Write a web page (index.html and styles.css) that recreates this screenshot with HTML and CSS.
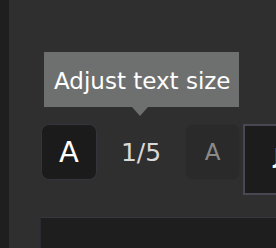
FILE: index.html
```html
<!DOCTYPE html>
<html>
<head>
<meta charset="utf-8">
<link rel="stylesheet" href="styles.css">
</head>
<body>
<div class="app">
  <aside class="rail"></aside>
  <main class="main">
    <div class="toolbar">
      <button class="size-btn active">A</button>
      <span class="count">1/5</span>
      <button class="size-btn muted">A</button>
      <div class="box"><span class="tick">J</span></div>
    </div>
    <div class="panel"><span class="panel-text">T</span></div>
  </main>
  <div class="tooltip">Adjust text size</div>
</div>
</body>
</html>
```
FILE: styles.css
```css
html, body {
  margin: 0;
  padding: 0;
  width: 276px;
  height: 248px;
  overflow: hidden;
  background: #2f2f2f;
  font-family: "DejaVu Sans", Verdana, sans-serif;
}
.app {
  position: relative;
  display: flex;
  width: 276px;
  height: 248px;
  overflow: hidden;
}
.rail {
  width: 9px;
  flex: none;
  background: #1f1f1f;
}
.main {
  flex: 1;
  display: flex;
  flex-direction: column;
  padding-top: 124px;
  min-width: 0;
}
.toolbar {
  display: flex;
  align-items: flex-start;
  margin-left: 32px;
  height: 71px;
  flex: none;
}
.toolbar > * {
  flex: none;
}
.size-btn {
  box-sizing: border-box;
  width: 56px;
  height: 56px;
  border-radius: 8px;
  font-family: "DejaVu Sans", Verdana, sans-serif;
  padding: 0;
  display: flex;
  align-items: center;
  justify-content: center;
}
.size-btn.active {
  background: #1b1b1b;
  border: 1px solid #34343a;
  color: #ffffff;
  font-size: 29px;
}
.size-btn.muted {
  width: 55px;
  background: #2a2a2a;
  border: 1px solid #2d2d2d;
  color: #8a8a8a;
  font-size: 23px;
}
.count {
  width: 88px;
  height: 56px;
  display: flex;
  align-items: center;
  justify-content: center;
  color: #d9d9d9;
  font-size: 25px;
}
.box {
  box-sizing: border-box;
  margin-left: 3px;
  width: 40px;
  height: 71px;
  background: #1c1c1c;
  border: 2px solid #484852;
  border-right: none;
  position: relative;
}
.tick {
  position: absolute;
  left: 29px;
  top: 18px;
  color: #ffffff;
  font-size: 22px;
  font-weight: bold;
}
.panel {
  margin-top: 22px;
  margin-left: 31px;
  flex: 1;
  background: #1e1e1e;
  border-top: 1px solid #36363e;
  border-left: 1px solid #2a2a30;
  position: relative;
}
.panel-text {
  position: absolute;
  left: 107px;
  top: 28px;
  color: #ffffff;
  font-size: 24px;
  line-height: 1;
}
.tooltip {
  position: absolute;
  left: 44px;
  top: 52px;
  width: 195px;
  height: 55px;
  box-sizing: border-box;
  background: #6e706f;
  color: #ffffff;
  font-size: 23px;
  padding-left: 10px;
  padding-top: 2px;
  line-height: 55px;
  white-space: nowrap;
}
.tooltip::after {
  content: "";
  position: absolute;
  left: 88px;
  top: 55px;
  border-left: 8px solid transparent;
  border-right: 8px solid transparent;
  border-top: 9px solid #6e706f;
}
```
